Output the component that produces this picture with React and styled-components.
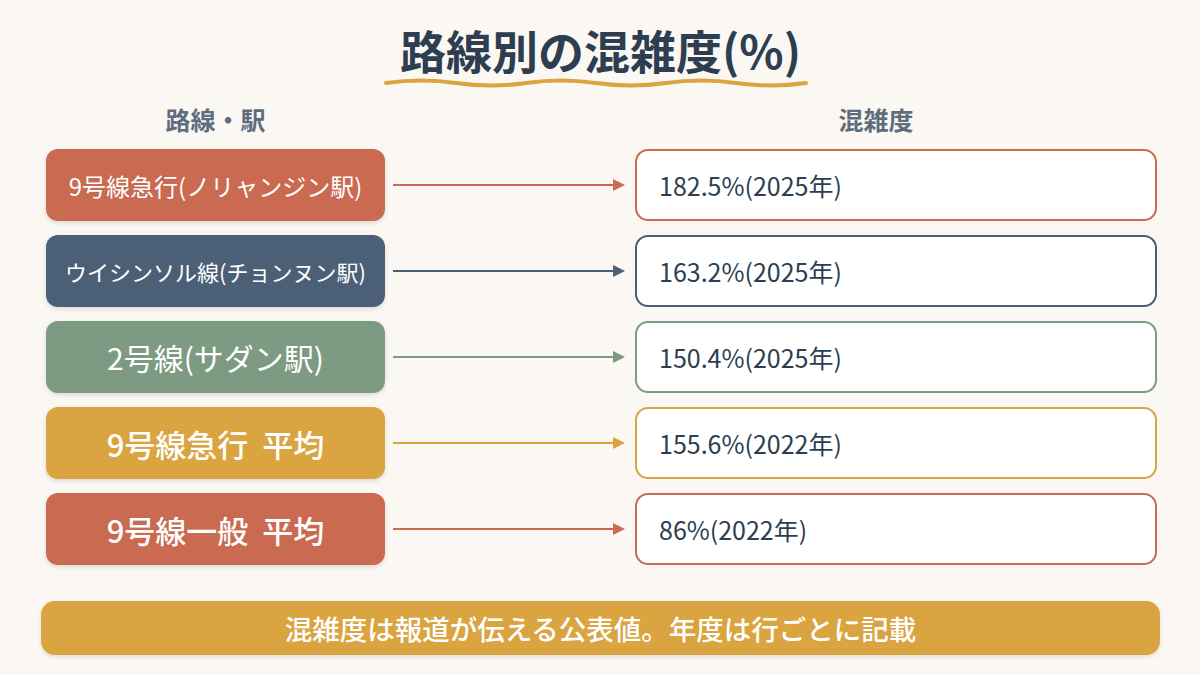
import React from "react";
import styled, { createGlobalStyle } from "styled-components";

const Global = createGlobalStyle`
  html, body { margin: 0; padding: 0; }
  body {
    background: #fbf7f3;
    font-family: "Noto Sans CJK JP", "Noto Sans", sans-serif;
  }
`;

const Page = styled.div`
  width: 1200px;
  height: 675px;
  box-sizing: border-box;
  padding: 21px 40px 0 41px;
  display: flex;
  flex-direction: column;
  align-items: stretch;
`;

const TitleWrap = styled.div`
  display: flex;
  flex-direction: column;
  align-items: center;
`;

const Title = styled.h1`
  margin: 0;
  font-size: 46px;
  line-height: 56px;
  font-weight: 700;
  color: #2c3e50;
`;

const Wave = styled.svg`
  display: block;
  width: 424px;
  height: 12px;
  margin-left: -9px;
`;

const Table = styled.div`
  margin: 15px 3px 0 5px;
  display: grid;
  grid-template-columns: 339px 250px 1fr;
  row-gap: 14px;
`;

const Header = styled.div`
  grid-column: ${(p) => p.$col};
  height: 30px;
  line-height: 30px;
  font-size: 25px;
  font-weight: 700;
  color: #5d6d7e;
  text-align: center;
  padding-right: ${(p) => p.$shift || 0}px;
  margin-bottom: 1px;
`;

const Label = styled.div`
  grid-column: 1;
  height: 72px;
  border-radius: 12px;
  background: ${(p) => p.$color};
  color: #fff;
  display: flex;
  align-items: center;
  justify-content: center;
  font-size: ${(p) => p.$size}px;
  font-weight: ${(p) => p.$weight};
  white-space: pre;
  box-shadow: 0 2px 5px rgba(0, 0, 0, 0.12);
`;

const ArrowCell = styled.div`
  grid-column: 2;
  display: flex;
  align-items: center;
  padding: 0 10px 0 8px;
`;

const ArrowLine = styled.div`
  flex: 1;
  height: 2px;
  background: ${(p) => p.$color};
`;

const ArrowHead = styled.div`
  width: 0;
  height: 0;
  border-top: 6px solid transparent;
  border-bottom: 6px solid transparent;
  border-left: 12px solid ${(p) => p.$color};
`;

const Value = styled.div`
  grid-column: 3;
  height: 72px;
  box-sizing: border-box;
  border: 2.5px solid ${(p) => p.$color};
  border-radius: 13px;
  background: #fff;
  display: flex;
  align-items: center;
  padding-left: 22px;
  font-size: 25px;
  font-weight: 400;
  color: #2c3e50;
`;

const Footer = styled.div`
  margin-top: 36px;
  height: 54px;
  border-radius: 14px;
  background: #daa440;
  color: #fff;
  display: flex;
  align-items: center;
  justify-content: center;
  font-size: 27.5px;
  font-weight: 500;
  box-shadow: 0 2px 5px rgba(0, 0, 0, 0.1);
`;

const rows = [
  { label: "9号線急行(ノリャンジン駅)", size: 24, weight: 400, color: "#c96a51", value: "182.5%(2025年)" },
  { label: "ウイシンソル線(チョンヌン駅)", size: 22, weight: 400, color: "#4b5f77", value: "163.2%(2025年)" },
  { label: "2号線(サダン駅)", size: 30, weight: 400, color: "#7c9b82", value: "150.4%(2025年)" },
  { label: "9号線急行  平均", size: 31, weight: 500, color: "#daa440", value: "155.6%(2022年)" },
  { label: "9号線一般  平均", size: 31, weight: 500, color: "#c96a51", value: "86%(2022年)" },
];

export default function App() {
  return (
    <>
      <Global />
      <Page>
        <TitleWrap>
          <Title>路線別の混雑度(%)</Title>
          <Wave viewBox="0 0 424 12">
            <path
              d="M2 6 Q 37 1 72 6 T 142 6 T 212 6 T 282 6 T 352 6 T 422 6"
              fill="none"
              stroke="#daa440"
              strokeWidth="4"
              strokeLinecap="round"
            />
          </Wave>
        </TitleWrap>
        <Table>
          <Header $col="1">路線・駅</Header>
          <Header $col="3" $shift={40}>混雑度</Header>
          {rows.map((r, i) => (
            <React.Fragment key={i}>
              <Label $color={r.color} $size={r.size} $weight={r.weight}>{r.label}</Label>
              <ArrowCell>
                <ArrowLine $color={r.color} />
                <ArrowHead $color={r.color} />
              </ArrowCell>
              <Value $color={r.color}>{r.value}</Value>
            </React.Fragment>
          ))}
        </Table>
        <Footer>混雑度は報道が伝える公表値。年度は行ごとに記載</Footer>
      </Page>
    </>
  );
}
